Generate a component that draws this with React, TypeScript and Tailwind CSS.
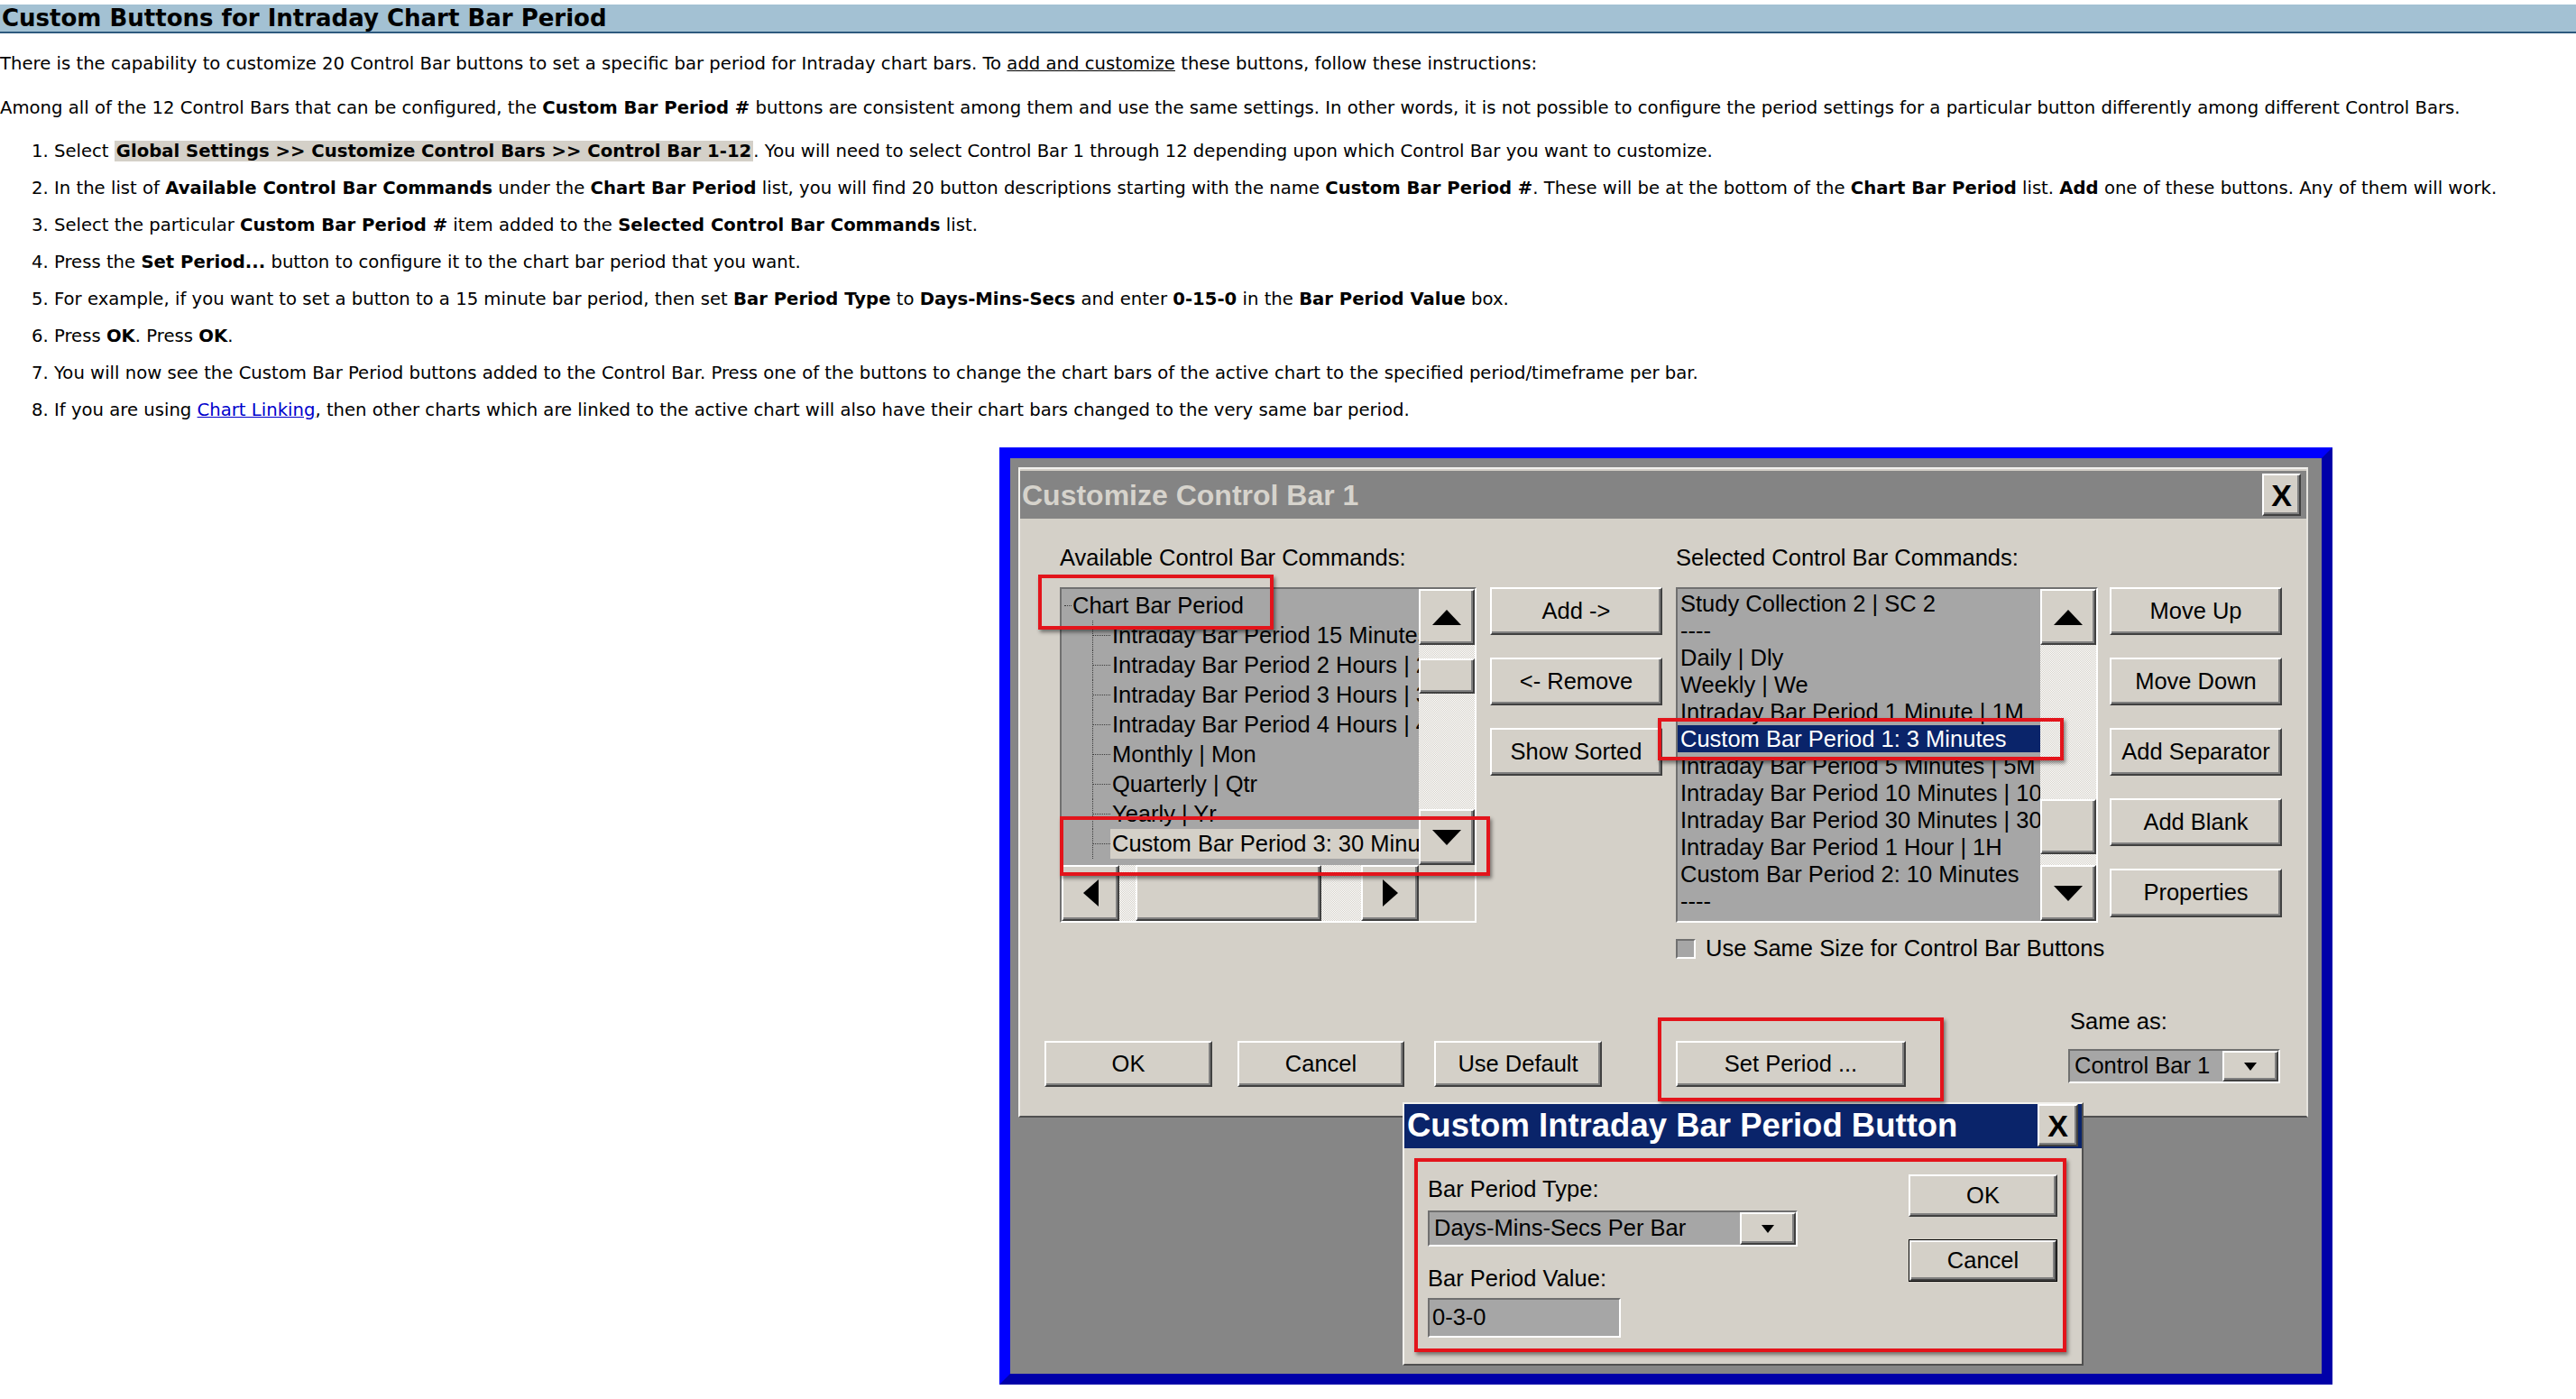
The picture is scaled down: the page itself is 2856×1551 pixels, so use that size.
import type { ReactNode } from "react";

// classic 3D bevels used by the dialog controls
const raised =
  "bg-[#d4d0c8] border-2 border-t-white border-l-white border-r-[#404040] border-b-[#404040] shadow-[inset_-2px_-2px_0_#808080]";
const sunken = "border-2 border-t-[#707070] border-l-[#707070] border-r-white border-b-white";
const dither =
  "bg-[image:repeating-conic-gradient(#d4d0c8_0%_25%,#ffffff_0%_50%)] bg-[length:2px_2px]";
const listBg = "bg-[#a6a6a6]";
const redBox =
  "absolute border-[4px] border-[#e3141b] shadow-[2px_3px_4px_rgba(0,0,0,0.45)] pointer-events-none";

type Dir = "up" | "down" | "left" | "right";

function Arrow({ dir, w, h }: { dir: Dir; w: number; h: number }) {
  const points = {
    up: `0,${h} ${w / 2},0 ${w},${h}`,
    down: `0,0 ${w},0 ${w / 2},${h}`,
    left: `${w},0 ${w},${h} 0,${h / 2}`,
    right: `0,0 ${w},${h / 2} 0,${h}`,
  }[dir];
  return (
    <svg width={w} height={h} viewBox={`0 0 ${w} ${h}`} className="block">
      <polygon points={points} fill="#000" />
    </svg>
  );
}

function WinButton({ children, className = "" }: { children: ReactNode; className?: string }) {
  return (
    <div className={`${raised} flex items-center justify-center text-[25.5px] leading-none ${className}`}>
      {children}
    </div>
  );
}

function CloseButton({ className = "" }: { className?: string }) {
  return (
    <div className={`${raised} flex items-center justify-center text-[34px] font-bold leading-none text-black ${className}`}>
      X
    </div>
  );
}

function ScrollButton({ dir, className = "" }: { dir: Dir; className?: string }) {
  const vertical = dir === "up" || dir === "down";
  return (
    <div className={`${raised} flex shrink-0 items-center justify-center ${className}`}>
      {vertical ? <Arrow dir={dir} w={32} h={17} /> : <Arrow dir={dir} w={17} h={30} />}
    </div>
  );
}

function VScroll({ thumb }: { thumb: string }) {
  return (
    <div className="flex h-full w-[62px] flex-col">
      <ScrollButton dir="up" className="h-[62px] w-full" />
      <div className={`flex-1 ${dither}`}>
        <div className={`${raised} w-full ${thumb}`} />
      </div>
      <ScrollButton dir="down" className="h-[62px] w-full" />
    </div>
  );
}

function Combo({ value, className = "" }: { value: string; className?: string }) {
  return (
    <div className={`${sunken} flex ${className}`}>
      <div className={`${listBg} flex flex-1 items-center overflow-hidden whitespace-nowrap pl-[5px] text-[25.5px] leading-none`}>
        {value}
      </div>
      <div className={`${raised} flex w-[62px] items-center justify-center`}>
        <Arrow dir="down" w={14} h={9} />
      </div>
    </div>
  );
}

const treeItems = [
  "Intraday Bar Period 15 Minutes | 15M",
  "Intraday Bar Period 2 Hours | 2H",
  "Intraday Bar Period 3 Hours | 3H",
  "Intraday Bar Period 4 Hours | 4H",
  "Monthly | Mon",
  "Quarterly | Qtr",
  "Yearly | Yr",
  "Custom Bar Period 3: 30 Minutes",
];

const selectedItems = [
  "Study Collection 2 | SC 2",
  "----",
  "Daily | Dly",
  "Weekly | We",
  "Intraday Bar Period 1 Minute | 1M",
  "Custom Bar Period 1: 3 Minutes",
  "Intraday Bar Period 5 Minutes | 5M",
  "Intraday Bar Period 10 Minutes | 10M",
  "Intraday Bar Period 30 Minutes | 30M",
  "Intraday Bar Period 1 Hour | 1H",
  "Custom Bar Period 2: 10 Minutes",
  "----",
];

function TreeList() {
  const dots = "border-dotted border-[#3c3c3c]";
  return (
    <div className={`${sunken} grid h-[372px] w-[462px] grid-cols-[1fr_62px] grid-rows-[1fr_62px]`}>
      <div className={`${listBg} overflow-hidden whitespace-nowrap pt-[2px] text-[25.5px] leading-[33px]`}>
        <div className="flex h-[33px]">
          <span className="ml-[3px] flex w-[8px] shrink-0 flex-col">
            <span className={`h-1/2 border-b ${dots}`} />
          </span>
          <span className="pl-[1px]">Chart Bar Period</span>
        </div>
        {treeItems.map((item, i) => (
          <div key={item} className="flex h-[33px]">
            <span className={`ml-[34px] flex w-[20px] shrink-0 flex-col border-l ${dots}`}>
              <span className={`h-1/2 border-b ${dots}`} />
            </span>
            <span className={`pl-[2px] ${i === treeItems.length - 1 ? "flex-1 bg-[#d4d0c8]" : ""}`}>{item}</span>
          </div>
        ))}
      </div>
      <VScroll thumb="mt-[15px] h-[39px]" />
      <div className="flex h-[62px]">
        <ScrollButton dir="left" className="h-full w-[64px]" />
        <div className={`flex-1 ${dither}`}>
          <div className={`${raised} ml-[18px] h-full w-[206px]`} />
        </div>
        <ScrollButton dir="right" className="h-full w-[64px]" />
      </div>
      <div className="bg-[#d4d0c8]" />
    </div>
  );
}

function SelectedList() {
  return (
    <div className={`${sunken} flex h-[372px] w-[468px]`}>
      <div className={`${listBg} flex-1 overflow-hidden whitespace-nowrap pt-[1px] text-[25.5px] leading-[30px]`}>
        {selectedItems.map((item, i) => (
          <div key={i} className={`h-[30px] pl-[3px] ${i === 5 ? "bg-[#0a246a] text-white" : ""}`}>
            {item}
          </div>
        ))}
      </div>
      <VScroll thumb="mt-[171px] h-[61px]" />
    </div>
  );
}

function CustomizeDialog() {
  return (
    <div className="h-[721px] w-[1430px] border-2 border-t-[#f2f1ed] border-l-[#f2f1ed] border-r-[#e6e4df] border-b-[#505050] bg-[#d4d0c8] font-['Liberation_Sans',Arial,sans-serif] text-black">
      <div className="mt-[2px] flex h-[53px] items-center justify-between bg-[#848484]">
        <span className="pl-[2px] text-[32px] font-bold leading-none text-[#d6d3cc]">Customize Control Bar 1</span>
        <CloseButton className="mr-[6px] h-[47px] w-[43px]" />
      </div>

      <div className="pl-[27px] pt-[27px]">
        <div className="ml-[17px] flex">
          <div className="w-[462px]">
            <div className="mb-[16px] h-[33px] text-[25.5px] leading-[33px]">Available Control Bar Commands:</div>
            <TreeList />
          </div>
          <div className="ml-[15px] flex w-[191px] flex-col gap-[25px] pt-[49px]">
            <WinButton className="h-[53px]">Add -&gt;</WinButton>
            <WinButton className="h-[53px]">&lt;- Remove</WinButton>
            <WinButton className="h-[53px]">Show Sorted</WinButton>
          </div>
          <div className="ml-[15px] w-[468px]">
            <div className="mb-[16px] h-[33px] text-[25.5px] leading-[33px]">Selected Control Bar Commands:</div>
            <SelectedList />
            <div className="mt-[18px] flex h-[22px] items-center gap-[11px]">
              <div className={`${sunken} h-[22px] w-[22px] shrink-0 bg-[#a6a6a6]`} />
              <span className="whitespace-nowrap text-[25.5px] leading-none">Use Same Size for Control Bar Buttons</span>
            </div>
          </div>
          <div className="ml-[13px] flex w-[191px] flex-col gap-[25px] pt-[49px]">
            <WinButton className="h-[53px]">Move Up</WinButton>
            <WinButton className="h-[53px]">Move Down</WinButton>
            <WinButton className="h-[53px]">Add Separator</WinButton>
            <WinButton className="h-[53px]">Add Blank</WinButton>
            <WinButton className="h-[54px]">Properties</WinButton>
          </div>
        </div>

        <div className="mt-[53px] flex items-end">
          <WinButton className="h-[51px] w-[186px]">OK</WinButton>
          <WinButton className="ml-[28px] h-[51px] w-[185px]">Cancel</WinButton>
          <WinButton className="ml-[33px] h-[51px] w-[186px]">Use Default</WinButton>
          <WinButton className="ml-[82px] h-[51px] w-[255px]">Set Period ...</WinButton>
          <div className="mb-[4px] ml-[180px] w-[235px]">
            <div className="mb-[14px] h-[33px] pl-[2px] text-[25.5px] leading-[33px]">Same as:</div>
            <Combo value="Control Bar 1" className="h-[38px] w-[235px]" />
          </div>
        </div>
      </div>
    </div>
  );
}

function BarPeriodDialog() {
  return (
    <div className="absolute left-[435px] top-[714px] h-[292px] w-[755px] border-2 border-t-[#f2f1ed] border-l-[#f2f1ed] border-r-[#505050] border-b-[#505050] bg-[#d4d0c8] font-['Liberation_Sans',Arial,sans-serif] text-black">
      <div className="flex h-[49px] items-start justify-between bg-[#0a246a]">
        <span className="self-center pl-[3px] text-[36.5px] font-bold leading-none text-white">
          Custom Intraday Bar Period Button
        </span>
        <CloseButton className="mr-[4px] h-[47px] w-[45px]" />
      </div>
      <div className="flex pl-[26px] pt-[29px]">
        <div className="w-[410px]">
          <div className="h-[33px] text-[25.5px] leading-[33px]">Bar Period Type:</div>
          <Combo value="Days-Mins-Secs Per Bar" className="mt-[7px] h-[40px] w-[410px]" />
          <div className="mt-[19px] h-[33px] text-[25.5px] leading-[33px]">Bar Period Value:</div>
          <div className={`${sunken} ${listBg} mt-[5px] flex h-[44px] w-[214px] items-center pl-[3px] text-[25.5px] leading-none`}>
            0-3-0
          </div>
        </div>
        <div className="ml-[123px] w-[165px]">
          <WinButton className="h-[47px]">OK</WinButton>
          <div className="mt-[25px] border border-black">
            <WinButton className="h-[45px]">Cancel</WinButton>
          </div>
        </div>
      </div>
    </div>
  );
}

function DialogFigure() {
  return (
    <div className="relative ml-[1108px] mt-[21px] h-[1039px] w-[1478px] border-[12px] border-t-[#0000ff] border-l-[#0000ff] border-r-[#0000a8] border-b-[#0000a8] bg-[#868686] pl-[9px] pt-[10px]">
      <CustomizeDialog />
      <BarPeriodDialog />

      {/* annotation frames */}
      <div className={`${redBox} left-[31px] top-[129px] h-[61px] w-[261px]`} />
      <div className={`${redBox} left-[55px] top-[397px] h-[66px] w-[477px]`} />
      <div className={`${redBox} left-[718px] top-[288px] h-[47px] w-[450px]`} />
      <div className={`${redBox} left-[718px] top-[620px] h-[93px] w-[317px]`} />
      <div className={`${redBox} left-[448px] top-[776px] h-[215px] w-[723px]`} />
    </div>
  );
}

export default function App() {
  return (
    <div className="h-[1551px] w-[2856px] overflow-hidden bg-white font-['DejaVu_Sans',sans-serif] text-black">
      <h2 className="mt-[5px] h-[32px] border-b-2 border-[#2e5a7e] bg-[#a3c1d3] pl-[2px] text-[26px] font-bold leading-[30px]">
        Custom Buttons for Intraday Chart Bar Period
      </h2>

      <div className="mt-[13px] whitespace-nowrap text-[19.65px] leading-[41px]">
        <p>
          There is the capability to customize 20 Control Bar buttons to set a specific bar period for Intraday chart
          bars. To <span className="underline">add and customize</span> these buttons, follow these instructions:
        </p>
        <p className="mt-[8px]">
          Among all of the 12 Control Bars that can be configured, the <b>Custom Bar Period #</b> buttons are consistent
          among them and use the same settings. In other words, it is not possible to configure the period settings for a
          particular button differently among different Control Bars.
        </p>
        <ol className="mt-[7px] pl-[35px]">
          <li>
            1. Select{" "}
            <span className="bg-[#d4d0c8] px-[2px] font-bold">
              Global Settings &gt;&gt; Customize Control Bars &gt;&gt; Control Bar 1-12
            </span>
            . You will need to select Control Bar 1 through 12 depending upon which Control Bar you want to customize.
          </li>
          <li>
            2. In the list of <b>Available Control Bar Commands</b> under the <b>Chart Bar Period</b> list, you will find
            20 button descriptions starting with the name <b>Custom Bar Period #</b>. These will be at the bottom of the{" "}
            <b>Chart Bar Period</b> list. <b>Add</b> one of these buttons. Any of them will work.
          </li>
          <li>
            3. Select the particular <b>Custom Bar Period #</b> item added to the <b>Selected Control Bar Commands</b>{" "}
            list.
          </li>
          <li>
            4. Press the <b>Set Period...</b> button to configure it to the chart bar period that you want.
          </li>
          <li>
            5. For example, if you want to set a button to a 15 minute bar period, then set <b>Bar Period Type</b> to{" "}
            <b>Days-Mins-Secs</b> and enter <b>0-15-0</b> in the <b>Bar Period Value</b> box.
          </li>
          <li>
            6. Press <b>OK</b>. Press <b>OK</b>.
          </li>
          <li>
            7. You will now see the Custom Bar Period buttons added to the Control Bar. Press one of the buttons to change
            the chart bars of the active chart to the specified period/timeframe per bar.
          </li>
          <li>
            8. If you are using <span className="text-[#0000cc] underline">Chart Linking</span>, then other charts which
            are linked to the active chart will also have their chart bars changed to the very same bar period.
          </li>
        </ol>
      </div>

      <DialogFigure />
    </div>
  );
}
